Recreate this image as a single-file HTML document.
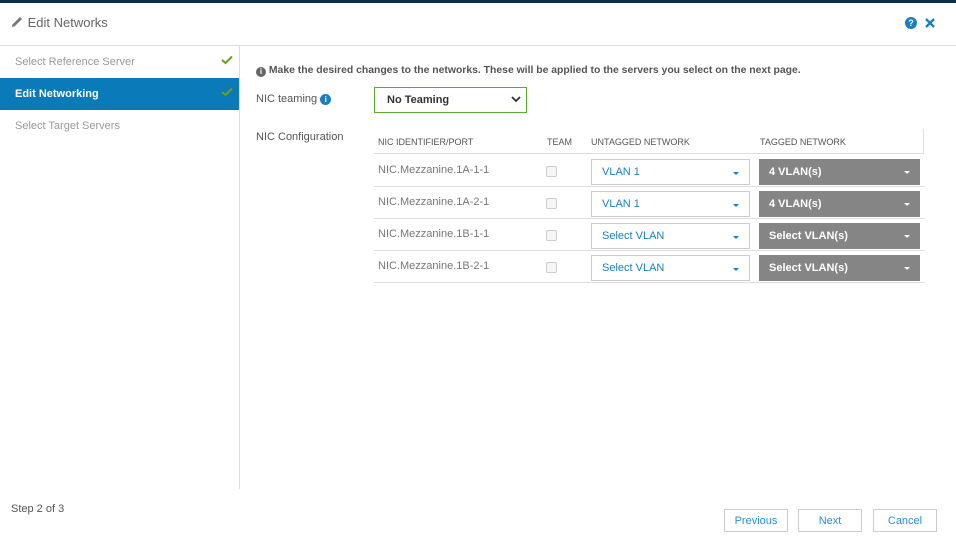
<!DOCTYPE html>
<html><head><style>
*{box-sizing:border-box;margin:0;padding:0}
body{width:956px;height:541px;background:#fff;font-family:"Liberation Sans",sans-serif;position:relative;overflow:hidden;color:#444}
.a{position:absolute}
.topbar{left:0;top:0;width:956px;height:3px;background:#0b2f47}
.hdr{left:0;top:45px;width:956px;height:1px;background:#ddd}
.side{left:239px;top:46px;width:1px;height:443px;background:#ddd}
.nav{left:0;width:239px;height:32px;font-size:11px;line-height:32px;padding-left:15px;color:#999}
.chk{position:absolute;right:6px;top:9px}
.th{top:137px;font-size:9px;color:#555}
.row{left:374px;width:550px;height:1px;background:#ddd}
.nic{left:378px;font-size:11px;color:#777}
.cb{left:546px;width:11px;height:11px;border:1px solid #ccc;border-radius:2px;background:#f6f6f6}
.sel{left:591px;width:159px;height:26px;border:1px solid #ccc;font-size:11px;color:#1b7ec2;line-height:24px;padding-left:10px}
.sel:after,.tg:after{content:"";position:absolute;right:10px;top:12px;border-left:3px solid transparent;border-right:3px solid transparent;border-top:3px solid #1b7ec2}
.tg{left:759px;width:161px;height:26px;background:#858585;color:#fff;font-weight:bold;font-size:11px;line-height:26px;padding-left:10px}
.tg:after{border-top-color:#fff}
.btn{top:509px;height:23px;border:1px solid #ccc;font-size:11px;color:#2b8ed0;text-align:center;line-height:23px}
</style></head><body>
<div class="a topbar"></div>
<div class="a" style="left:11px;top:15px;font-size:13px;color:#666">
<svg width="13" height="13" viewBox="0 0 13 13" style="vertical-align:-1px"><path d="M1 12 L1.5 9.5 L9 2 L11 4 L3.5 11.5 Z" fill="#777"/></svg> Edit Networks</div>
<div class="a" style="left:905px;top:17px;width:12px;height:12px;border-radius:50%;background:#1b7ec2;color:#fff;font-size:9px;font-weight:bold;text-align:center;line-height:12px">?</div>
<svg class="a" style="left:924px;top:17px" width="12" height="12" viewBox="0 0 12 12"><path d="M2 2 L10 10 M10 2 L2 10" stroke="#1b7ec2" stroke-width="2.3"/></svg>
<div class="a hdr"></div>
<div class="a side"></div>
<div class="a nav" style="top:46px">Select Reference Server<svg class="chk" width="12" height="10" viewBox="0 0 12 10"><path d="M1 5 L4.5 8 L11 1.5" stroke="#6a9e1f" stroke-width="2" fill="none"/></svg></div>
<div class="a nav" style="top:78px;background:#0b7ab8;color:#fff;font-weight:bold">Edit Networking<svg class="chk" width="12" height="10" viewBox="0 0 12 10"><path d="M1 5 L4.5 8 L11 1.5" stroke="#6a9e1f" stroke-width="2" fill="none"/></svg></div>
<div class="a nav" style="top:110px">Select Target Servers</div>
<div class="a" style="left:11px;top:503px;font-size:11px;color:#555">Step 2 of 3</div>
<div class="a" style="left:256px;top:65px;font-size:10.4px;font-weight:bold;color:#555;white-space:nowrap"><span style="display:inline-block;width:10px;height:10px;border-radius:50%;background:#666;color:#fff;font-size:8px;text-align:center;line-height:10px;vertical-align:-1px">i</span> Make the desired changes to the networks. These will be applied to the servers you select on the next page.</div>
<div class="a" style="left:256px;top:93px;font-size:11px;color:#555">NIC teaming <span style="display:inline-block;width:11px;height:11px;border-radius:50%;background:#1b7ec2;color:#fff;font-size:8px;font-weight:bold;text-align:center;line-height:11px">i</span></div>
<div class="a" style="left:374px;top:87px;width:153px;height:26px;border:1px solid #5aab2f;font-size:11px;font-weight:bold;color:#333;line-height:24px;padding-left:12px">No Teaming
<svg style="position:absolute;right:5px;top:8px" width="10" height="7" viewBox="0 0 10 7"><path d="M1 1 L5 5 L9 1" stroke="#333" stroke-width="1.8" fill="none"/></svg></div>
<div class="a" style="left:256px;top:131px;font-size:11px;color:#555">NIC Configuration</div>
<div class="a" style="left:923px;top:129px;width:1px;height:24px;background:#ddd"></div>
<div class="a th" style="left:378px">NIC IDENTIFIER/PORT</div>
<div class="a th" style="left:547px">TEAM</div>
<div class="a th" style="left:591px">UNTAGGED NETWORK</div>
<div class="a th" style="left:760px">TAGGED NETWORK</div>
<div class="a row" style="top:153px"></div>
<div class="a nic" style="top:164px">NIC.Mezzanine.1A-1-1</div><div class="a cb" style="top:166px"></div>
<div class="a sel" style="top:159px">VLAN 1</div><div class="a tg" style="top:159px">4 VLAN(s)</div>
<div class="a row" style="top:186px"></div>
<div class="a nic" style="top:196px">NIC.Mezzanine.1A-2-1</div><div class="a cb" style="top:198px"></div>
<div class="a sel" style="top:191px">VLAN 1</div><div class="a tg" style="top:191px">4 VLAN(s)</div>
<div class="a row" style="top:218px"></div>
<div class="a nic" style="top:228px">NIC.Mezzanine.1B-1-1</div><div class="a cb" style="top:230px"></div>
<div class="a sel" style="top:223px">Select VLAN</div><div class="a tg" style="top:223px">Select VLAN(s)</div>
<div class="a row" style="top:250px"></div>
<div class="a nic" style="top:260px">NIC.Mezzanine.1B-2-1</div><div class="a cb" style="top:262px"></div>
<div class="a sel" style="top:255px">Select VLAN</div><div class="a tg" style="top:255px">Select VLAN(s)</div>
<div class="a row" style="top:282px"></div>
<div class="a btn" style="left:724px;width:64px">Previous</div>
<div class="a btn" style="left:798px;width:64px">Next</div>
<div class="a btn" style="left:873px;width:64px">Cancel</div>
</body></html>
